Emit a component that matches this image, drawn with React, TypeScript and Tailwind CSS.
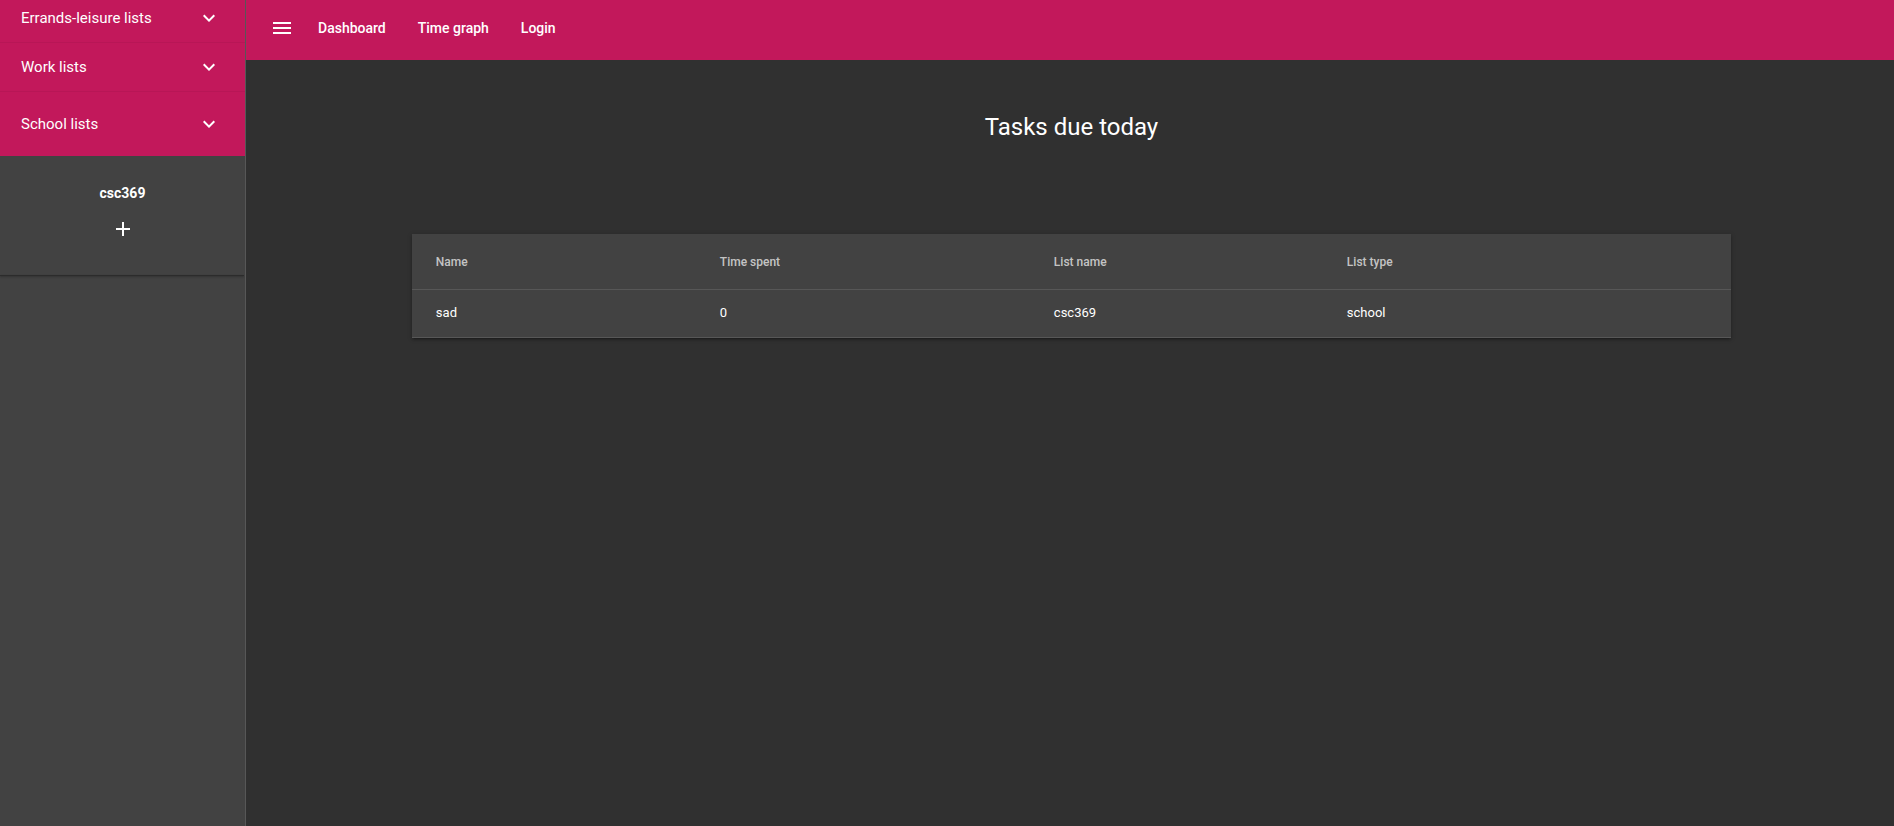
import React from 'react';

const ExpandMoreIcon = () => (
  <svg viewBox="0 0 24 24" className="h-6 w-6 fill-white" aria-hidden="true">
    <path d="M16.59 8.59L12 13.17 7.41 8.59 6 10l6 6 6-6z" />
  </svg>
);

const MenuIcon = () => (
  <svg viewBox="0 0 24 24" className="h-6 w-6 fill-white" aria-hidden="true">
    <path d="M3 18h18v-2H3v2zm0-5h18v-2H3v2zm0-7v2h18V6H3z" />
  </svg>
);

const AddIcon = () => (
  <svg viewBox="0 0 24 24" className="h-6 w-6 fill-white" aria-hidden="true">
    <path d="M19 13h-6v6h-2v-6H5v-2h6V5h2v6h6v2z" />
  </svg>
);

const lists = [
  { label: 'Errands-leisure lists', tall: false },
  { label: 'Work lists', tall: false },
  { label: 'School lists', tall: true },
];

const tasks = [{ name: 'sad', timeSpent: '0', listName: 'csc369', listType: 'school' }];

const Sidebar: React.FC = () => (
  <aside className="w-[246px] shrink-0 border-r border-[#575757] bg-[#424242] overflow-hidden">
    {/* drawer is scrolled a few px, so the first panel is cut off at the top */}
    <div className="-mt-[6px]">
      {lists.map((item) => (
        <div
          key={item.label}
          className={`flex items-center justify-between bg-[#c2185b] pl-[21px] pr-6 ${item.tall ? 'h-[64px]' : 'h-[49px] border-b border-black/5'}`}
        >
          <span className="text-[15px] text-white">{item.label}</span>
          <ExpandMoreIcon />
        </div>
      ))}
    </div>
    <div className="flex flex-col items-center pt-[27px] pb-[34px]">
      <span className="text-sm font-bold leading-5 text-white">csc369</span>
      <button className="mt-[14px]" aria-label="Add list">
        <AddIcon />
      </button>
    </div>
    <div className="mr-px h-px bg-[#2c2c2c] shadow-[0_1px_2px_rgba(0,0,0,0.35)]" />
  </aside>
);

const TopBar: React.FC = () => (
  <header className="flex h-[60px] shrink-0 items-center bg-[#c2185b] pb-1 pl-6">
    <button aria-label="Menu">
      <MenuIcon />
    </button>
    <nav className="ml-6 flex items-center gap-[32px] text-sm font-medium text-white">
      <span>Dashboard</span>
      <span>Time graph</span>
      <span>Login</span>
    </nav>
  </header>
);

const TaskTable: React.FC = () => (
  <div className="mx-auto w-[80.2%] bg-[#424242] shadow-[0_1px_5px_rgba(0,0,0,0.2),0_2px_2px_rgba(0,0,0,0.14),0_3px_1px_-2px_rgba(0,0,0,0.12)]">
    <div className="grid h-[56px] grid-cols-[284px_334px_293px_1fr] items-center border-b border-[#575757] text-xs font-medium text-white/70">
      <div className="pl-6">Name</div>
      <div className="pl-6">Time spent</div>
      <div className="pl-6">List name</div>
      <div className="pl-6">List type</div>
    </div>
    {tasks.map((t) => (
      <div
        key={t.name}
        className="grid h-[48px] grid-cols-[284px_334px_293px_1fr] items-center border-b border-[#575757] pb-px text-[13px] text-white"
      >
        <div className="pl-6">{t.name}</div>
        <div className="pl-6">{t.timeSpent}</div>
        <div className="pl-6">{t.listName}</div>
        <div className="pl-6">{t.listType}</div>
      </div>
    ))}
  </div>
);

export default function App() {
  return (
    <div className="flex h-screen w-full bg-[#303030] font-['Roboto',sans-serif]">
      <Sidebar />
      <div className="flex min-w-0 flex-1 flex-col">
        <TopBar />
        <main className="flex-1 pl-[3px]">
          <h1 className="mt-[51px] text-center text-2xl font-normal leading-8 text-white">Tasks due today</h1>
          <div className="mt-[91px]">
            <TaskTable />
          </div>
        </main>
      </div>
    </div>
  );
}
